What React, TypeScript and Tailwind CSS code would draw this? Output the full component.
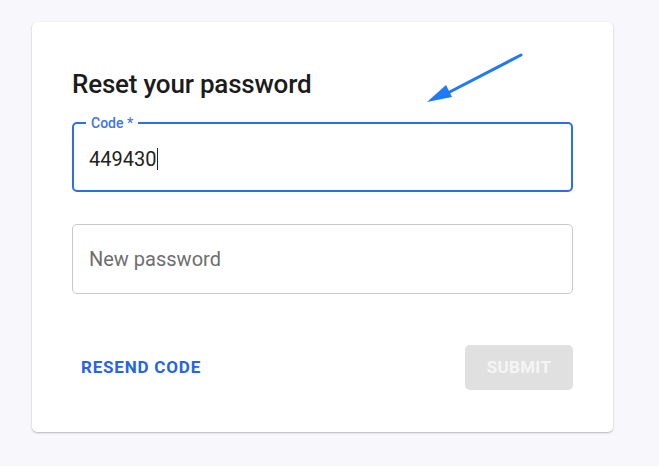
import React, { useState } from "react";

const font = { fontFamily: "Roboto, 'Liberation Sans', sans-serif" };

const App = () => {
  const [password, setPassword] = useState("");
  const code = "449430";

  return (
    <div className="min-h-[466px] w-full bg-[#f8f8fc] pt-[22px] pl-[32px]" style={font}>
      <div className="w-[581px] h-[410px] bg-white rounded-[5px] shadow-[0_1px_2px_rgba(0,0,0,0.25),0_0_1px_rgba(0,0,0,0.08)] px-[40px] pt-[46px] relative">
        {/* arrow annotation */}
        <svg className="absolute left-[390px] top-[29px]" width="110" height="60" viewBox="0 0 110 60">
          <line x1="99" y1="4" x2="18" y2="46" stroke="#1f7bf5" strokeWidth="3" strokeLinecap="round" />
          <polygon points="5,51 24,34 30,46" fill="#1f7bf5" />
        </svg>

        <h2 className="text-[26px] leading-[32px] font-medium text-[#1c1c1c] tracking-[-0.2px]">Reset your password</h2>

        <div className="relative mt-[22px] h-[70px] rounded-[5px] border-2 border-[#2f6fe6] flex items-center px-[15px]">
          <span className="absolute -top-[10px] left-[12px] bg-white px-[5px] text-[14px] leading-[18px] font-medium text-[#3d74e6]">
            Code *
          </span>
          <div className="flex items-center text-[20px] leading-[24px] text-[#222] pt-[3px]">
            {code}
            <span className="inline-block w-[1px] h-[22px] bg-[#222] ml-[1px]" />
          </div>
        </div>

        <div className="mt-[32px] h-[70px] rounded-[5px] border border-[#c9c9c9] flex items-center px-[16px]">
          <input
            value={password}
            onChange={(e) => setPassword(e.target.value)}
            placeholder="New password"
            className="w-full outline-none text-[20px] text-[#222] placeholder:text-[#6e6e6e] bg-transparent"
          />
        </div>

        <div className="mt-[51px] flex items-center justify-between">
          <button className="ml-[9px] text-[17px] font-bold tracking-[0.8px] text-[#2563eb]">RESEND CODE</button>
          <button className="w-[108px] h-[45px] rounded-[5px] bg-[#e0e0e0] text-[17px] font-bold tracking-[0.3px] text-[#f5f5f5]">
            SUBMIT
          </button>
        </div>
      </div>
    </div>
  );
};

export default App;
